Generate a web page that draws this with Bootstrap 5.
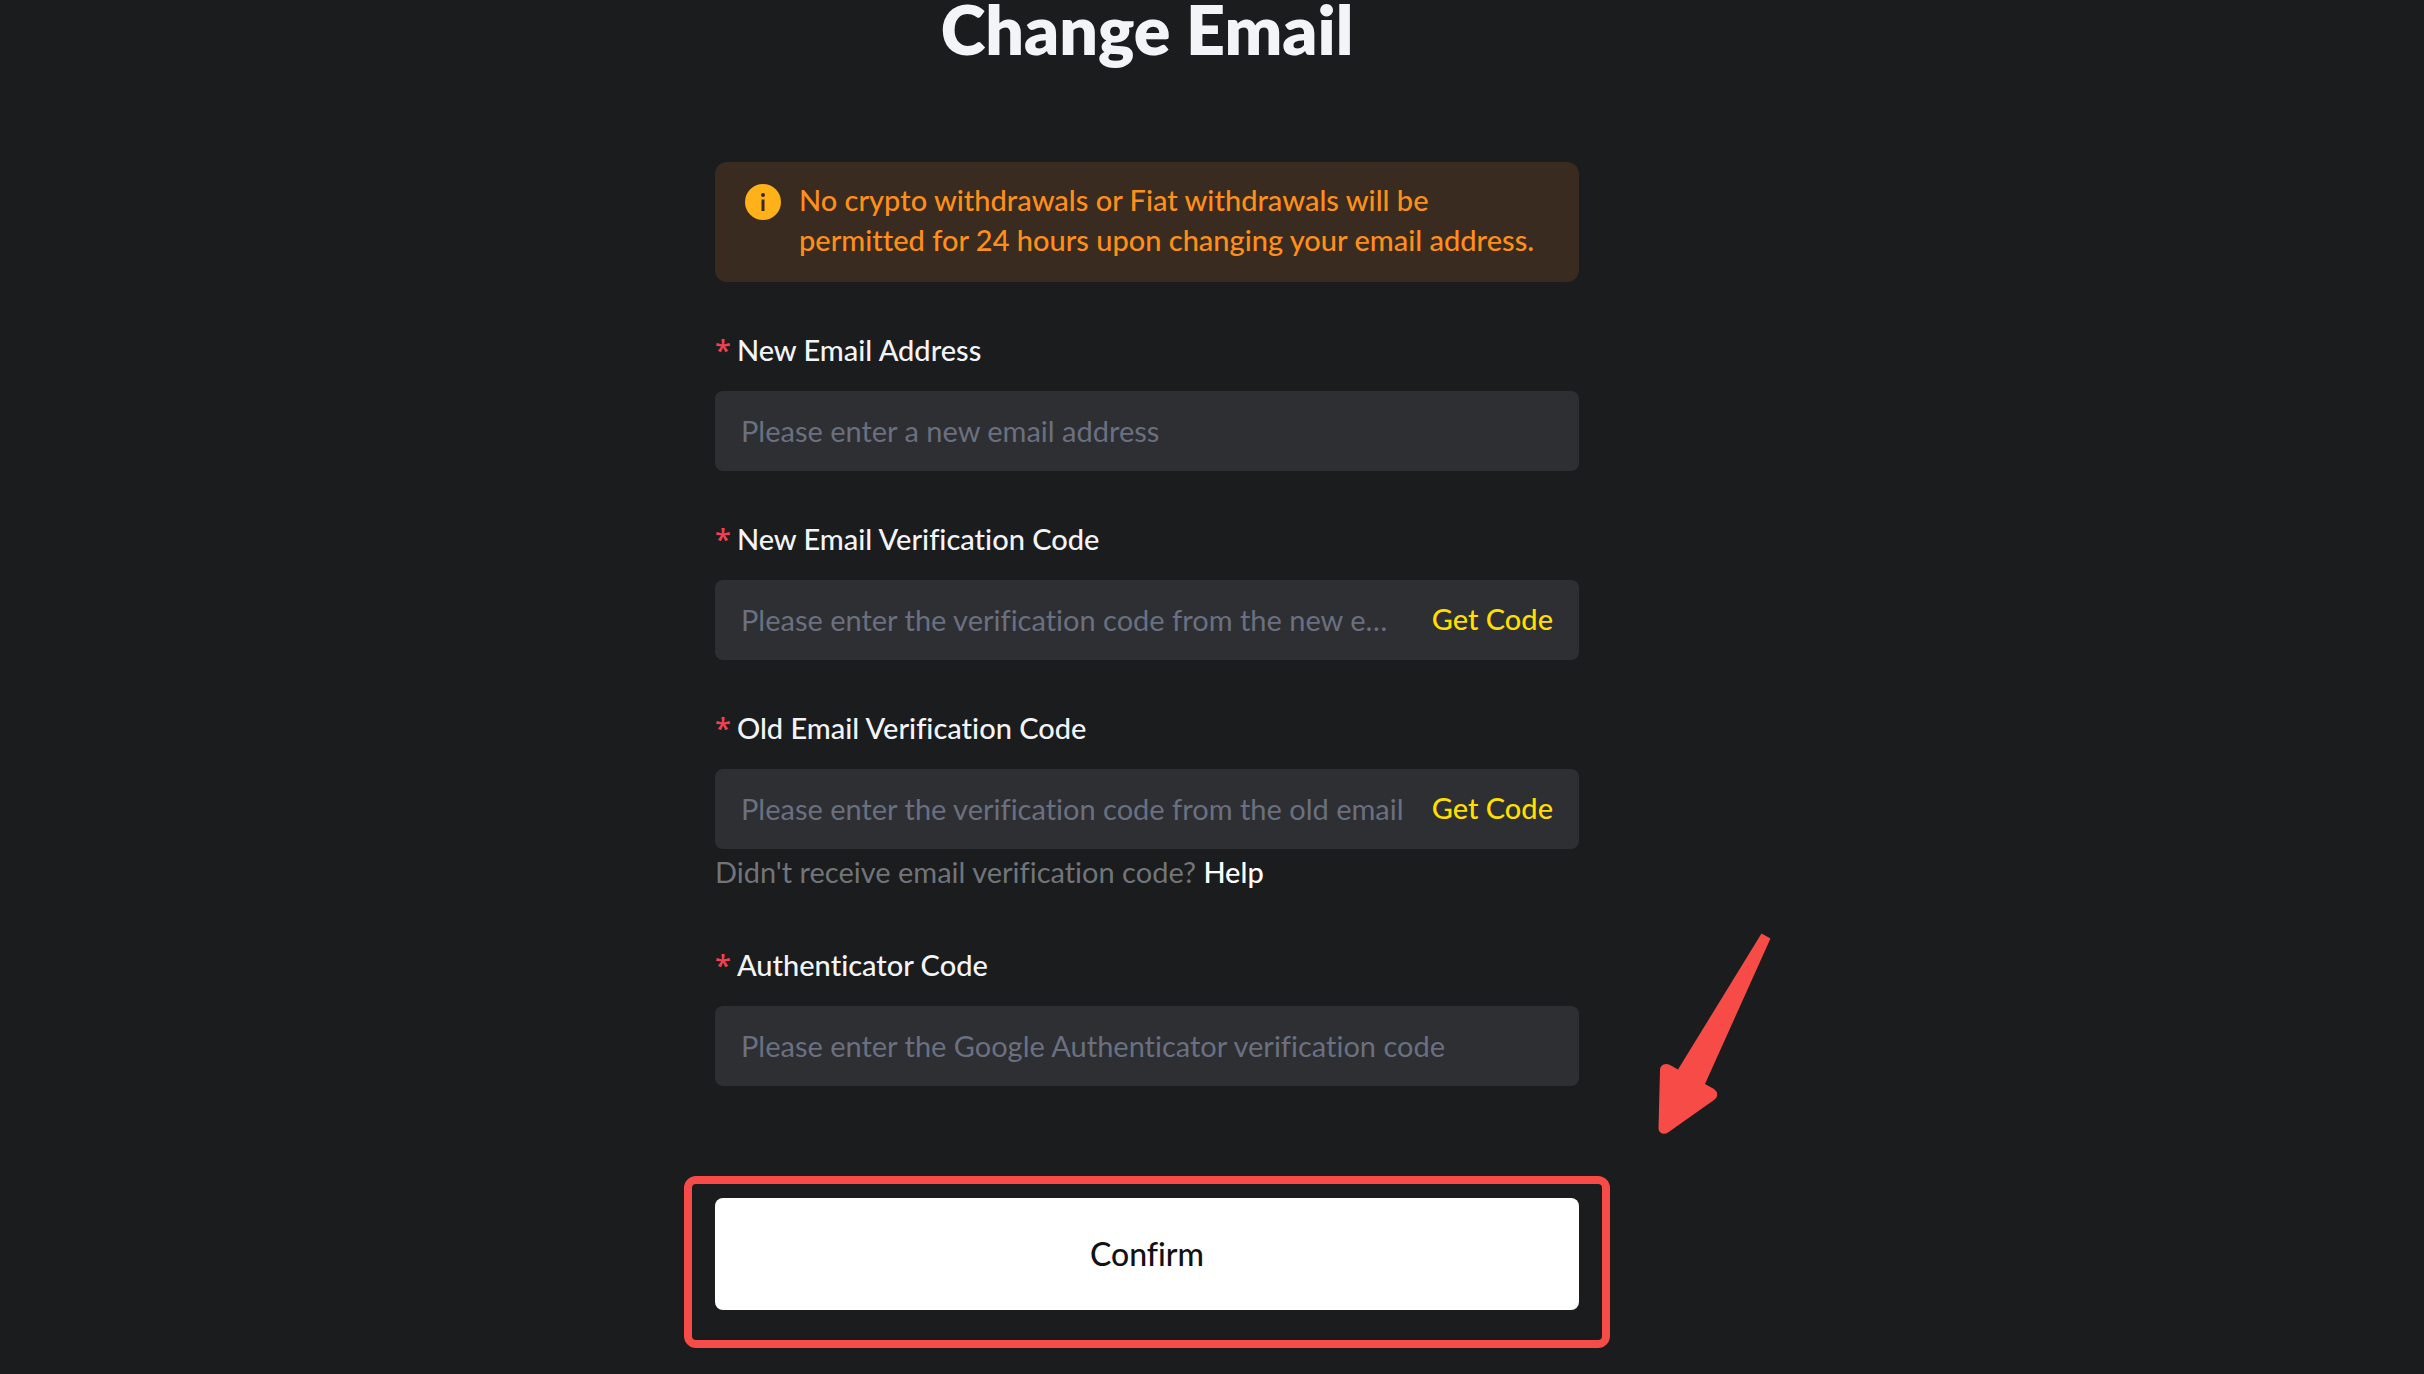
<!DOCTYPE html>
<html lang="en">
<head>
<meta charset="utf-8">
<meta name="viewport" content="width=device-width, initial-scale=1">
<title>Change Email</title>
<link href="https://cdn.jsdelivr.net/npm/bootstrap@5.3.0/dist/css/bootstrap.min.css" rel="stylesheet">
<style>
  body {
    background: #1b1c1d;
    color: #f3f4f8;
    font-family: Lato, "Noto Sans", sans-serif;
    font-size: 29px;
    line-height: 40px;
    font-weight: 500;
    font-variant-ligatures: none;
  }
  .page-shell { padding-right: 130px; }
  .form-column { width: 100%; max-width: 864px; }
  .page-title { font-size: 68px; line-height: 58px; font-weight: 800; margin-bottom: 104px; color: #f3f4f8; }
  .notice { background: #392b20; color: #fe8f19; border-radius: 12px; padding: 18px 20px 22px 30px; gap: 18px; }
  .notice svg { margin-top: 4px; }
  .field-block { margin-top: 48px; }
  .field-block label { margin-bottom: 21px; gap: 6px; color: #f3f4f8; }
  .field-star { color: #f04252; font-family: "Noto Sans", sans-serif; }
  .field-box { background: #2d2f33; border-radius: 8px; height: 80px; }
  .field-input, .field-input:focus {
    background: transparent; border: 0; box-shadow: none; color: #f3f4f8;
    font-size: 29px; font-weight: 400; line-height: 40px; padding: 0 0 2px 26px; height: 80px; min-width: 0;
    font-variant-ligatures: none; text-overflow: ellipsis;
  }
  .field-input:last-child { padding-right: 26px; }
  .field-input::placeholder { color: #6b7080; opacity: 1; text-overflow: ellipsis; }
  .code-btn, .code-btn:hover { color: #ffde00; font-size: 29px; font-weight: 500; line-height: 40px; padding: 0 26px 2px 22px; border: 0; white-space: nowrap; }
  .help-line { color: #71757a; line-height: 40px; padding: 3px 0 5px; font-weight: 400; }
  .help-line a { font-weight: 500; }
  .submit-area { margin-top: 112px; margin-bottom: 64px; }
  .confirm-btn, .confirm-btn:hover { background: #fff; color: #121214; height: 112px; border: 0; border-radius: 8px; font-size: 32px; font-weight: 500; font-variant-ligatures: none; }
  .callout-frame { position: absolute; inset: -22px -31px -38px; border: 8px solid #f74b47; border-radius: 12px; pointer-events: none; }
  .callout-arrow { position: absolute; left: calc(100% + 76px); top: -268px; pointer-events: none; }
</style>
</head>
<body>
<main class="page-shell d-flex justify-content-center">
  <div class="form-column">
    <h1 class="page-title text-center">Change Email</h1>

    <div class="notice d-flex align-items-start" role="alert">
      <svg class="flex-shrink-0" width="36" height="36" viewBox="0 0 36 36" aria-hidden="true">
        <circle cx="18" cy="18" r="18" fill="#ffb11a"/>
        <circle cx="18" cy="11" r="2" fill="#392b20"/>
        <rect x="16.5" y="15.5" width="3" height="11.5" fill="#392b20"/>
      </svg>
      <div>No crypto withdrawals or Fiat withdrawals will be<br>permitted for 24 hours upon changing your email address.</div>
    </div>

    <form>
      <div class="field-block">
        <label class="d-flex" for="newEmail"><span class="field-star">*</span>New Email Address</label>
        <div class="field-box d-flex">
          <input class="field-input form-control" type="email" id="newEmail" placeholder="Please enter a new email address">
        </div>
      </div>
      <div class="field-block">
        <label class="d-flex" for="newCode"><span class="field-star">*</span>New Email Verification Code</label>
        <div class="field-box d-flex align-items-center">
          <input class="field-input form-control flex-fill" type="text" id="newCode" placeholder="Please enter the verification code from the new email">
          <button class="code-btn btn" type="button">Get Code</button>
        </div>
      </div>
      <div class="field-block">
        <label class="d-flex" for="oldCode"><span class="field-star">*</span>Old Email Verification Code</label>
        <div class="field-box d-flex align-items-center">
          <input class="field-input form-control flex-fill" type="text" id="oldCode" placeholder="Please enter the verification code from the old email">
          <button class="code-btn btn" type="button">Get Code</button>
        </div>
        <div class="help-line">Didn't receive email verification code? <a class="text-white text-decoration-none" href="#">Help</a></div>
      </div>
      <div class="field-block">
        <label class="d-flex" for="authCode"><span class="field-star">*</span>Authenticator Code</label>
        <div class="field-box d-flex">
          <input class="field-input form-control" type="text" id="authCode" placeholder="Please enter the Google Authenticator verification code">
        </div>
      </div>
      <div class="submit-area position-relative">
        <button class="confirm-btn btn w-100" type="submit">Confirm</button>
        <div class="callout-frame"></div>
        <svg class="callout-arrow" width="120" height="208" viewBox="0 0 120 208" aria-hidden="true">
          <path fill="#f74b47" d="M106.500 3.500L115.500 8.500L50 154L59 159Q63 162 62 166Q61.500 168.500 59 170L13 202.500Q10 204.500 7 203.500Q3.500 202 3.500 198L5 140Q5 136 8.500 134.500Q11.500 133.500 15 135L23 139.500Z"/>
        </svg>
      </div>
    </form>
  </div>
</main>
<script src="https://cdn.jsdelivr.net/npm/bootstrap@5.3.0/dist/js/bootstrap.bundle.min.js"></script>
</body>
</html>
